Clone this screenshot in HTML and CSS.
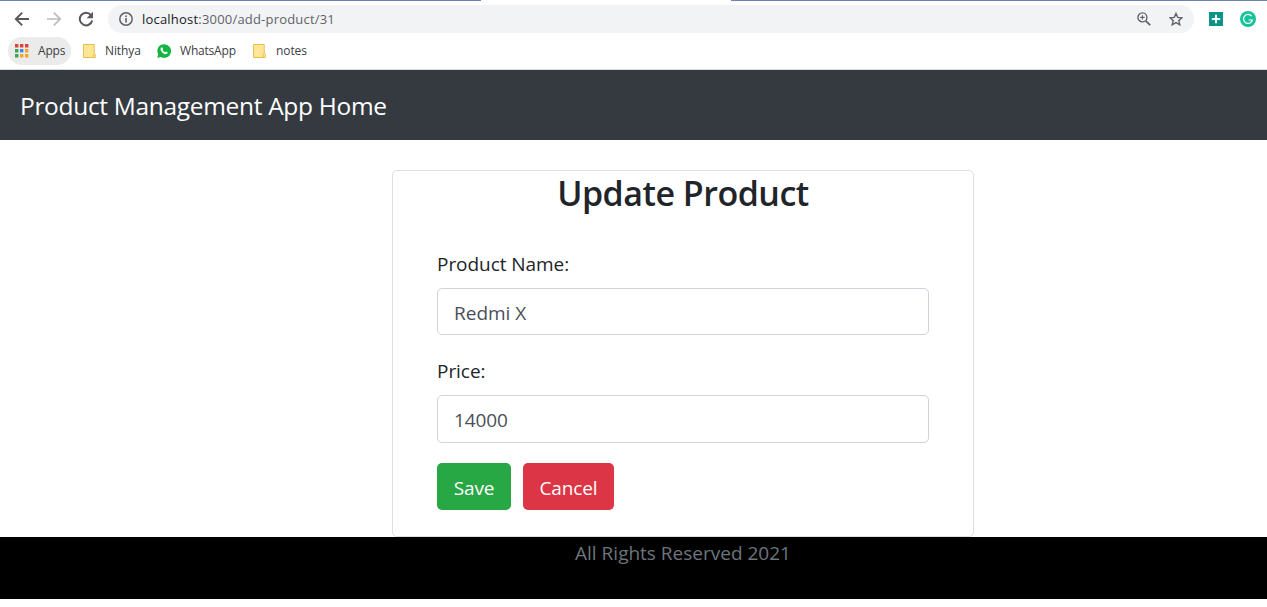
FILE: index.html
```html
<!DOCTYPE html>
<html lang="en">
<head>
<meta charset="utf-8">
<title>Product Management App</title>
<link rel="stylesheet" href="styles.css">
</head>
<body>
<div class="browser">
  <div class="tab-strip"><span class="tab-active"></span></div>
  <div class="toolbar">
    <svg class="nav-icon" width="16" height="16" viewBox="0 0 16 16" fill="none" stroke="#55585c" stroke-width="1.9"><path d="M15 8H2M8.2 1.6L1.8 8l6.4 6.4"/></svg>
    <svg class="nav-icon" width="16" height="16" viewBox="0 0 16 16" fill="none" stroke="#babcbe" stroke-width="1.7"><path d="M1 8h13M7.8 1.6L14.2 8l-6.4 6.4"/></svg>
    <svg class="nav-icon" width="16" height="16" viewBox="0 0 16 16"><path d="M13 4.1A6.3 6.3 0 1 0 14.2 9.6" fill="none" stroke="#55585c" stroke-width="2"/><path d="M15 .8v6.4H8.6z" fill="#55585c"/></svg>
    <div class="address">
      <svg class="info" width="14" height="14" viewBox="0 0 14 14"><circle cx="7" cy="7" r="6.2" fill="none" stroke="#5f6368" stroke-width="1.5"/><path d="M6.2 6h1.6v4.4H6.2zM6.2 3.4h1.6V5H6.2z" fill="#5f6368"/></svg>
      <span class="url"><span class="host">localhost</span>:3000/add-product/31</span>
      <svg class="magnify" width="14" height="14" viewBox="0 0 14 14" fill="none" stroke="#5f6368"><circle cx="5.4" cy="5.4" r="4.5" stroke-width="1.4"/><path d="M8.8 8.8l4.4 4.4" stroke-width="1.8"/><path d="M5.4 3.2v4.4M3.2 5.4h4.4" stroke-width="1.1"/></svg>
      <svg width="14" height="14" viewBox="0 0 14 14" fill="none" stroke="#5f6368" stroke-width="1.4"><path d="M7 1.500l1.700 3.900 4.300.4-3.200 2.800 1 4.200L7 10.600l-3.800 2.200 1-4.200L1 5.800l4.300-.4z"/></svg>
    </div>
    <svg class="ext-plus" width="14" height="14" viewBox="0 0 14 14"><path fill="#0d9488" d="M0 0h14v14H0z"/><path d="M7 2.8v8.400M2.800 7h8.400" stroke="#fff" stroke-width="1.8"/></svg>
    <svg class="ext-round" width="16" height="16" viewBox="0 0 16 16"><circle cx="8" cy="8" r="8" fill="#15c39a"/><path d="M11.600 5.200A4.500 4.500 0 1 0 12.400 9H8.600M10.600 11.800l1.800-2.600" fill="none" stroke="#fff" stroke-width="1.2"/></svg>
  </div>
  <div class="bookmarks">
    <div class="bookmark apps">
      <svg width="14" height="14" viewBox="0 0 14 14"><path fill="#db4437" d="M0 0h3.400v3.400H0zM5 0h3.400v3.400H5zM10 0h3.400v3.400H10z"/><path fill="#34a853" d="M0 5h3.400v3.400H0zM0 10h3.400v3.400H0z"/><path fill="#4285f4" d="M5 5h3.400v3.400H5z"/><path fill="#f2a52b" d="M10 5h3.400v3.400H10zM5 10h3.400v3.400H5zM10 10h3.400v3.400H10z"/></svg>
      <span>Apps</span>
    </div>
    <div class="bookmark nithya">
      <svg width="13" height="14" viewBox="0 0 13 14"><path d="M.5.5h10.700v8.700l1.100 1v3.300H.5z" fill="#ffe694" stroke="#e6c04f"/><path d="M10.300 13.500v-3l1-1.200" fill="none" stroke="#e6c04f"/></svg>
      <span>Nithya</span>
    </div>
    <div class="bookmark whatsapp">
      <svg width="14" height="14" viewBox="0 0 14 14"><path fill="#12b53f" d="M7.100.2a6.800 6.800 0 1 1-3.200 12.700L.2 13.800l1-3.500A6.800 6.800 0 0 1 7.100.2z"/><path fill="#fff" d="M4.500 3.400c.5-.3 1 0 1.200.5l.4 1c.1.4-.5.8-.5 1.100.5 1.100 1.300 1.800 2.400 2.300.4 0 .7-.9 1.100-.8l1.300.7c.3.2.3.5.2.9-.4 1-1.600 1.400-2.600 1.100C5.800 9.500 4 7.700 3.500 5.600c-.1-.9.3-1.800 1-2.200z"/></svg>
      <span>WhatsApp</span>
    </div>
    <div class="bookmark notes">
      <svg width="13" height="14" viewBox="0 0 13 14"><path d="M.5.5h10.700v8.700l1.100 1v3.300H.5z" fill="#ffe694" stroke="#e6c04f"/><path d="M10.300 13.500v-3l1-1.200" fill="none" stroke="#e6c04f"/></svg>
      <span>notes</span>
    </div>
  </div>
</div>
<header class="navbar"><span class="brand">Product Management App Home</span></header>
<main class="content">
  <form class="card">
    <h2 class="title">Update Product</h2>
    <label class="label" for="name">Product Name:</label>
    <input class="field" id="name" value="Redmi X">
    <label class="label label-price" for="price">Price:</label>
    <input class="field field-price" id="price" value="14000">
    <div class="actions">
      <button class="btn save" type="button">Save</button>
      <button class="btn cancel" type="button">Cancel</button>
    </div>
  </form>
</main>
<footer class="footer"><span>All Rights Reserved 2021</span></footer>
</body>
</html>
```
FILE: styles.css
```css
* { box-sizing: border-box; }
body { margin: 0; background: #fff; font-family: "Open Sans", "Noto Sans", sans-serif; color: #212529; overflow: hidden; }
svg { display: block; flex: none; }
.browser { height: 70px; border-bottom: 1px solid #d5d8dc; }
.tab-strip { height: 1px; background: #6f82b5; display: flex; }
.tab-active { width: 250px; margin-left: 481px; background: #fff; }
.toolbar { height: 36px; display: flex; align-items: center; padding-left: 14px; }
.nav-icon { margin-right: 16px; }
.address { width: 1086px; height: 28px; margin-left: -2px; border-radius: 14px; background: #f1f3f4; display: flex; align-items: center; padding: 0 11px; }
.url { margin-left: 9px; flex: 1; font-size: 13px; letter-spacing: .2px; color: #5f6368; white-space: nowrap; }
.host { color: #202124; }
.magnify { margin-right: 18px; }
.ext-plus { margin-left: 15px; }
.ext-round { margin-left: 17px; }
.bookmarks { height: 28px; display: flex; align-items: center; padding-left: 8px; font-size: 12px; letter-spacing: -.2px; color: #3c4043; }
.bookmark { display: flex; align-items: center; height: 28px; }
.bookmark span { white-space: nowrap; padding-bottom: 2px; }
.apps { width: 63px; padding-left: 7px; gap: 9px; border-radius: 14px; background: #ebebeb; }
.nithya { width: 75px; padding-left: 12px; gap: 9px; letter-spacing: -.1px; }
.whatsapp { width: 96px; padding-left: 11px; gap: 9px; }
.notes { padding-left: 11px; gap: 10px; letter-spacing: -.1px; }
.navbar { height: 70px; background: #343a40; padding: 2px 0 0 20px; display: flex; align-items: center; }
.brand { color: #fff; font-size: 24.5px; letter-spacing: -.32px; line-height: 36px; white-space: nowrap; }
.content { height: 397px; padding: 30px 0 0 392px; }
.card { width: 582px; height: 367px; border: 1px solid #dfdfdf; border-radius: 5px; padding: 0 44px; display: flex; flex-direction: column; }
.title { margin: 1px 0 37px; font-size: 34px; letter-spacing: -.5px; line-height: 43px; font-weight: 600; text-align: center; white-space: nowrap; }
.label { font-size: 19px; letter-spacing: -.05px; line-height: 24px; margin-bottom: 12px; }
.label-price { margin: 24px 0 12px; }
.field { width: 492px; height: 47px; border: 1px solid #ced4da; border-radius: 5px; padding: 2px 16px 0; background: #fff; font: 19px "Open Sans", sans-serif; color: #495057; outline: 0; }
.field-price { height: 48px; letter-spacing: -.1px; }
.actions { display: flex; gap: 12px; margin-top: 20px; }
.btn { height: 47px; border: 0; border-radius: 5px; padding: 2px 0 0; color: #fff; font: 19px "Open Sans", sans-serif; letter-spacing: -.1px; }
.save { width: 74px; background: #28a745; }
.cancel { width: 91px; background: #dc3545; }
.footer { height: 62px; background: #000; color: #6c757d; font-size: 19px; line-height: 32px; padding-left: 99px; text-align: center; }
```
